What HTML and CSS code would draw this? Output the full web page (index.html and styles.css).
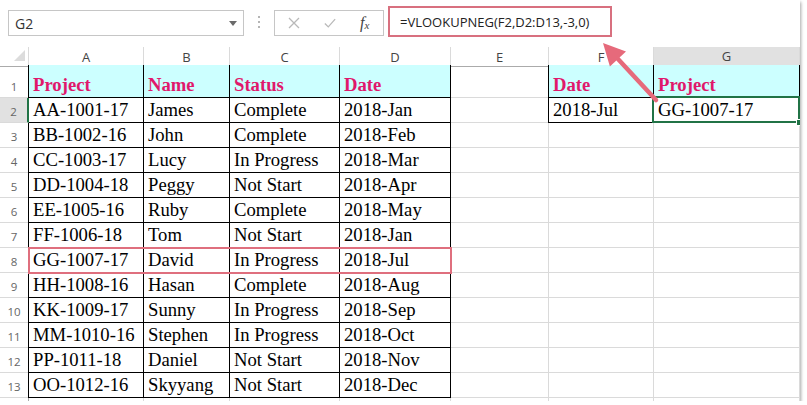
FILE: index.html
```html
<!DOCTYPE html>
<html lang="en">
<head>
    <meta charset="UTF-8">
    <title>VLOOKUPNEG</title>
    <link rel="stylesheet" href="styles.css">
</head>
<body>
<div class="app">
    <div class="fbar">
        <div class="namebox">
            <span>G2</span>
            <svg class="dd" viewBox="0 0 8 5"><polygon points="0,0 8,0 4,5" fill="#6a6a6a"/></svg>
        </div>
        <div class="grip"><i></i><i></i><i></i></div>
        <div class="btns">
            <svg class="ico" viewBox="0 0 12 12"><path d="M1 1L11 11M11 1L1 11" stroke="#b9b9b9" stroke-width="1.3" fill="none"/></svg>
            <svg class="ico" viewBox="0 0 14 12"><path d="M1 6.5L5 10.5L13 1.5" stroke="#b9b9b9" stroke-width="1.5" fill="none"/></svg>
            <span class="fx">f<sub>x</sub></span>
        </div>
        <div class="formula">=VLOOKUPNEG(F2,D2:D13,-3,0)</div>
    </div>

    <div class="sheet">
        <div class="row heads">
            <div class="corner"><svg viewBox="0 0 28 17"><polygon points="25,3 25,14 14,14" fill="#dcdcdc"/></svg></div>
            <div class="ch">A</div><div class="ch">B</div><div class="ch">C</div><div class="ch">D</div>
            <div class="ch">E</div><div class="ch">F</div><div class="ch sel">G</div>
        </div>
        <div class="row top">
            <div class="rh edge">1</div>
            <div class="c t h lb">Project</div><div class="c t h">Name</div><div class="c t h">Status</div><div class="c t h">Date</div>
            <div class="c"></div>
            <div class="c t h lb">Date</div><div class="c t h">Project</div>
        </div>
        <div class="row">
            <div class="rh sel">2</div>
            <div class="c t">AA-1001-17</div><div class="c t">James</div><div class="c t">Complete</div><div class="c t">2018-Jan</div>
            <div class="c"></div>
            <div class="c t lb">2018-Jul</div>
            <div class="c t">GG-1007-17<span class="selbox"></span><span class="handle"></span></div>
        </div>
        <div class="row">
            <div class="rh edge">3</div>
            <div class="c t lb">BB-1002-16</div><div class="c t">John</div><div class="c t">Complete</div><div class="c t">2018-Feb</div>
            <div class="c"></div><div class="c"></div><div class="c"></div>
        </div>
        <div class="row">
            <div class="rh edge">4</div>
            <div class="c t lb">CC-1003-17</div><div class="c t">Lucy</div><div class="c t">In Progress</div><div class="c t">2018-Mar</div>
            <div class="c"></div><div class="c"></div><div class="c"></div>
        </div>
        <div class="row">
            <div class="rh edge">5</div>
            <div class="c t lb">DD-1004-18</div><div class="c t">Peggy</div><div class="c t">Not Start</div><div class="c t">2018-Apr</div>
            <div class="c"></div><div class="c"></div><div class="c"></div>
        </div>
        <div class="row">
            <div class="rh edge">6</div>
            <div class="c t lb">EE-1005-16</div><div class="c t">Ruby</div><div class="c t">Complete</div><div class="c t">2018-May</div>
            <div class="c"></div><div class="c"></div><div class="c"></div>
        </div>
        <div class="row">
            <div class="rh edge">7</div>
            <div class="c t lb">FF-1006-18</div><div class="c t">Tom</div><div class="c t">Not Start</div><div class="c t">2018-Jan</div>
            <div class="c"></div><div class="c"></div><div class="c"></div>
        </div>
        <div class="row">
            <div class="rh edge">8</div>
            <div class="c t lb">GG-1007-17<span class="mark"></span></div><div class="c t">David</div><div class="c t">In Progress</div><div class="c t">2018-Jul</div>
            <div class="c"></div><div class="c"></div><div class="c"></div>
        </div>
        <div class="row">
            <div class="rh edge">9</div>
            <div class="c t lb">HH-1008-16</div><div class="c t">Hasan</div><div class="c t">Complete</div><div class="c t">2018-Aug</div>
            <div class="c"></div><div class="c"></div><div class="c"></div>
        </div>
        <div class="row">
            <div class="rh edge">10</div>
            <div class="c t lb">KK-1009-17</div><div class="c t">Sunny</div><div class="c t">In Progress</div><div class="c t">2018-Sep</div>
            <div class="c"></div><div class="c"></div><div class="c"></div>
        </div>
        <div class="row">
            <div class="rh edge">11</div>
            <div class="c t lb">MM-1010-16</div><div class="c t">Stephen</div><div class="c t">In Progress</div><div class="c t">2018-Oct</div>
            <div class="c"></div><div class="c"></div><div class="c"></div>
        </div>
        <div class="row">
            <div class="rh edge">12</div>
            <div class="c t lb">PP-1011-18</div><div class="c t">Daniel</div><div class="c t">Not Start</div><div class="c t">2018-Nov</div>
            <div class="c"></div><div class="c"></div><div class="c"></div>
        </div>
        <div class="row">
            <div class="rh edge">13</div>
            <div class="c t lb">OO-1012-16</div><div class="c t">Skyyang</div><div class="c t">Not Start</div><div class="c t">2018-Dec</div>
            <div class="c"></div><div class="c"></div><div class="c"></div>
        </div>
        <div class="row">
            <div class="rh"></div>
            <div class="c"></div><div class="c"></div><div class="c"></div><div class="c"></div>
            <div class="c"></div><div class="c"></div><div class="c"></div>
        </div>
    </div>

    <svg class="arrow" viewBox="0 0 800 401">
        <line x1="656" y1="100" x2="618" y2="59" stroke="#e66a7b" stroke-width="4.5" stroke-linecap="round"/>
        <polygon points="603,43 626,51.6 609.9,66.6" fill="#e66a7b"/>
    </svg>
</div>
</body>
</html>
```

FILE: styles.css
```css
body {
    margin: 0;
    background-color: #fff;
    font-family: "Open Sans", "Noto Sans", sans-serif;
}

.app {
    position: relative;
    width: 800px;
    height: 401px;
    overflow: hidden;
    background-color: #fff;
    box-shadow: 1px 2px 3px rgba(0, 0, 0, 0.35);
}

/* formula bar */
.fbar {
    display: flex;
    align-items: flex-start;
    height: 47px;
}

.namebox {
    margin: 10px 0 0 8px;
    width: 236px;
    height: 26px;
    box-sizing: border-box;
    border: 1px solid #c6c6c6;
    display: flex;
    align-items: center;
    justify-content: space-between;
    padding: 0 6px;
    font-size: 14px;
    color: #333;
}

.dd {
    width: 8px;
    height: 5px;
}

.grip {
    margin: 16px 0 0 14px;
    display: flex;
    flex-direction: column;
    gap: 3px;
}

.grip i {
    display: block;
    width: 2px;
    height: 2px;
    background-color: #b5b5b5;
}

.btns {
    margin: 10px 0 0 14px;
    width: 110px;
    height: 26px;
    box-sizing: border-box;
    border: 1px solid #c6c6c6;
    display: flex;
    align-items: center;
    gap: 24px;
    padding-left: 13px;
}

.ico {
    width: 12px;
    height: 12px;
}

.fx {
    font-family: "Liberation Serif", serif;
    font-style: italic;
    font-size: 16px;
    color: #444;
}

.fx sub {
    font-size: 11px;
    vertical-align: -1px;
}

.formula {
    margin: 6px 0 0 4px;
    width: 224px;
    height: 31px;
    box-sizing: border-box;
    border: 2px solid #d8707f;
    padding-left: 10px;
    display: flex;
    align-items: center;
    font-size: 13px;
    color: #222;
}

/* grid */
.row {
    display: grid;
    grid-template-columns: 29px 115px 86px 110px 111px 98px 105px 146px;
    height: 25px;
}

.row.heads {
    height: 18px;
}

.row.top {
    height: 33px;
}

.corner,
.ch {
    box-sizing: border-box;
    border-right: 1px solid #dadada;
    border-bottom: 1px solid #ababab;
}

.corner svg {
    display: block;
    width: 28px;
    height: 17px;
}

.ch {
    display: flex;
    align-items: center;
    justify-content: center;
    font-size: 13px;
    color: #444;
}

.ch.sel {
    background-color: #e1e1e1;
    border-bottom: 2px solid #217346;
}

.rh {
    box-sizing: border-box;
    border-right: 1px solid #ababab;
    border-bottom: 1px solid #dadada;
    display: flex;
    align-items: flex-end;
    justify-content: center;
    padding-bottom: 3px;
    font-size: 11.5px;
    color: #666;
}

.rh.edge {
    border-right-color: #000;
}

.rh.sel {
    background-color: #e1e1e1;
    border-right: 2px solid #217346;
}

.c {
    position: relative;
    box-sizing: border-box;
    border-right: 1px solid #dadada;
    border-bottom: 1px solid #dadada;
    display: flex;
    align-items: flex-end;
    padding: 0 0 2px 4px;
    font-family: "Liberation Serif", "Times New Roman", serif;
    font-size: 18.67px;
    line-height: 21px;
    white-space: nowrap;
    color: #000;
}

.c.t {
    border-color: #000;
}

.c.h {
    background-color: #ccffff;
    color: #e0186b;
    font-weight: bold;
}

.c.lb {
    box-shadow: -1px 0 0 #000;
}

.mark {
    position: absolute;
    left: -1px;
    top: -1px;
    width: 424px;
    height: 27px;
    box-sizing: border-box;
    border: 2px solid #df6f7e;
    z-index: 2;
}

.selbox {
    position: absolute;
    left: -2px;
    top: -2px;
    right: -1px;
    bottom: -1px;
    border: 2px solid #217346;
    z-index: 2;
}

.handle {
    position: absolute;
    right: -4px;
    bottom: -4px;
    width: 5px;
    height: 5px;
    background-color: #217346;
    border: 1px solid #fff;
    z-index: 3;
}

.arrow {
    position: absolute;
    top: 0;
    left: 0;
    width: 800px;
    height: 401px;
    pointer-events: none;
    z-index: 4;
}
```
